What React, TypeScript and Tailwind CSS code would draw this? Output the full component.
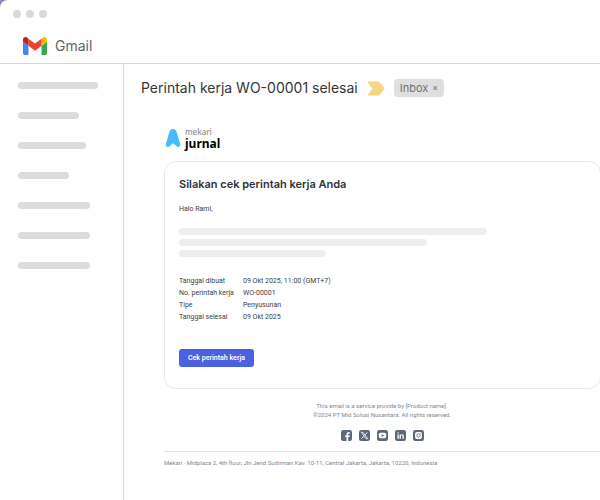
import { FC, ReactNode } from "react";

interface ISocial {
  name: string;
  icon: ReactNode;
}

const menuWidths = ["w-20", "w-[61px]", "w-[68px]", "w-[51px]", "w-18", "w-18", "w-18"];

const details = [
  { label: "Tanggal dibuat", value: "09 Okt 2025, 11:00 (GMT+7)" },
  { label: "No. perintah kerja", value: "WO-00001" },
  { label: "Tipe", value: "Penyusunan" },
  { label: "Tanggal selesai", value: "09 Okt 2025" },
];

const socials: ISocial[] = [
  {
    name: "Facebook",
    icon: (
      <path
        d="M12 24v-8.500H9V12h3V9.500C12 6.300 13.800 4.600 16.800 4.600l2.500.2v3.200h-1.600c-1.500 0-2 .9-2 1.900V12h3.600l-.6 3.500h-3V24z"
        fill="white"
      />
    ),
  },
  {
    name: "X",
    icon: (
      <g fill="none" stroke="white">
        <path d="M5 5h3.6L19 19h-3.6z" strokeWidth="1.8" />
        <path d="M18.2 5l-5.2 5.800M10.600 13.400L5.600 19" strokeWidth="2" />
      </g>
    ),
  },
  {
    name: "YouTube",
    icon: (
      <>
        <rect x="4" y="6" width="16" height="12" rx="3.5" fill="white" />
        <path d="M10 9l5.5 3-5.500 3z" fill="#5d6778" />
      </>
    ),
  },
  {
    name: "LinkedIn",
    icon: (
      <g fill="white">
        <circle cx="6.7" cy="6.6" r="1.7" />
        <path d="M5.3 9.6h2.8V19H5.3zM10 9.6h2.7v1.3c.5-.9 1.6-1.6 3-1.6 2.8 0 3.5 1.8 3.5 4.3V19h-2.8v-4.9c0-1.2-.2-2.4-1.7-2.4s-1.9 1.1-1.9 2.3v5H10z" />
      </g>
    ),
  },
  {
    name: "Instagram",
    icon: (
      <>
        <rect x="4.5" y="4.5" width="15" height="15" rx="4" fill="white" />
        <circle cx="12" cy="12" r="3.7" fill="white" stroke="#5d6778" strokeWidth="1.8" />
        <circle cx="16.6" cy="7.4" r="1" fill="#5d6778" />
      </>
    ),
  },
];

const GmailLogo: FC = () => (
  <svg className="w-6 h-[18px]" viewBox="0 0 88 66" aria-hidden="true">
    <path fill="#4285f4" d="M6 66h14V32L0 17v43c0 3.3 2.7 6 6 6" />
    <path fill="#34a853" d="M68 66h14c3.3 0 6-2.7 6-6V17L68 32" />
    <path fill="#fbbc04" d="M68 6v26l20-15V9c0-7.4-8.5-11.6-14.4-7.2" />
    <path fill="#ea4335" d="M20 32V6l24 18L68 6v26L44 50" />
    <path fill="#c5221f" d="M0 9v8l20 15V6l-5.600-4.200C8.500-2.600 0 1.600 0 9" />
  </svg>
);

const JurnalLogo: FC = () => (
  <div className="flex items-start gap-1 pl-px">
    <svg className="w-4 h-5" viewBox="0 0 16 20" aria-hidden="true">
      <path
        d="M8 1C5.700 1 4.800 2.500 4.200 4.400L.9 15.700C.2 18 2.200 20 4.100 18.600L8 15.200l3.900 3.400c1.900 1.400 3.900-.6 3.200-2.900L11.800 4.400C11.200 2.500 10.300 1 8 1z"
        fill="#45bdf8"
      />
    </svg>
    <div className="font-['Noto_Sans',sans-serif]">
      <p className="text-[8px] leading-[8px] font-medium text-[#8f8f8f]">mekari</p>
      <p className="text-[12px] leading-[15px] font-bold text-black">jurnal</p>
    </div>
  </div>
);

// top bar with the window dots and the app name
const Header: FC = () => (
  <header className="h-16 border-b border-[#d3dadb]">
    <div className="flex gap-[5px] px-[13px] pt-[10px]">
      <span className="size-2 rounded-full bg-[#d9d9d9]" />
      <span className="size-2 rounded-full bg-[#d9d9d9]" />
      <span className="size-2 rounded-full bg-[#d9d9d9]" />
    </div>
    <div className="flex items-center gap-2 px-[23px] pt-[18px]">
      <GmailLogo />
      <span className="text-[14px] leading-5 text-[#626466]">Gmail</span>
    </div>
  </header>
);

const Sidebar: FC = () => (
  <aside className="w-31 shrink-0 border-r border-[#d3dadb] pt-[18px] pl-[18px]">
    <ul className="space-y-[23px]">
      {menuWidths.map((width, index) => (
        <li key={index} className={`h-[7px] rounded-full bg-[#dcdcda] ${width}`} />
      ))}
    </ul>
  </aside>
);

const Subject: FC = () => (
  <div className="flex items-center gap-[9px] pl-[17px]">
    <h1 className="text-[14px] leading-5 text-[#333537]">
      Perintah kerja WO-00001 selesai
    </h1>
    <svg className="w-[18px] h-[15px]" viewBox="0 0 18 15" aria-hidden="true">
      <path
        d="M1 1H11.500Q12.300 1 12.800 1.700L17 7.500 12.800 13.300Q12.300 14 11.500 14H1L5.800 7.500z"
        fill="#f8d584"
        stroke="#f8d584"
        strokeLinejoin="round"
      />
    </svg>
    <button
      type="button"
      className="flex items-center gap-1 h-[18px] px-[6px] rounded-sm bg-[#dfdfdf] text-[11px] text-[#727272]"
    >
      Inbox <span className="text-[9px]">×</span>
    </button>
  </div>
);

const EmailCard: FC = () => (
  <section className="mt-[10px] -mr-px rounded-xl border border-[#e6e8e9] px-[14px] pt-[14px] pb-[21px] text-[7px] leading-3 text-[#3c3e42]">
    <h2 className="font-['Inter',sans-serif] text-[11px] leading-4 font-semibold text-[#2f3237]">
      Silakan cek perintah kerja Anda
    </h2>
    <p className="mt-[11px]">Halo Rami,</p>
    <div className="mt-[13px] space-y-1">
      <div className="h-[7px] w-[308px] rounded-full bg-[#eeeeed]" />
      <div className="h-[7px] w-[248px] rounded-full bg-[#eeeeed]" />
      <div className="h-[7px] w-[147px] rounded-full bg-[#eeeeed]" />
    </div>
    <table className="mt-[18px]">
      <tbody>
        {details.map(({ label, value }) => (
          <tr key={label}>
            <th scope="row" className="w-16 p-0 text-left font-normal">
              {label}
            </th>
            <td className="p-0">{value}</td>
          </tr>
        ))}
      </tbody>
    </table>
    <button
      type="button"
      className="mt-[26px] block h-[18px] px-[9px] rounded-[3px] bg-[#4b61dd] font-semibold text-white"
    >
      Cek perintah kerja
    </button>
  </section>
);

const Footer: FC = () => (
  <footer className="text-[6px] leading-[9px] text-[#85888c]">
    <div className="pt-3 text-center">
      <p>This email is a service provide by [Product name].</p>
      <p>©2024 PT Mid Solusi Nusantara. All rights reserved.</p>
      <div className="flex justify-center gap-[7px] pt-[11px]">
        {socials.map(({ name, icon }) => (
          <a key={name} href="#" aria-label={name}>
            <svg className="size-[11px]" viewBox="0 0 24 24">
              <rect width="24" height="24" rx="5" fill="#5d6778" />
              {icon}
            </svg>
          </a>
        ))}
      </div>
    </div>
    <p className="mt-[10px] border-t border-[#e3e5e6] pt-[6px]">
      Mekari · Midplaza 2, 4th floor, Jln Jend Sudirman Kav. 10-11, Central
      Jakarta, Jakarta, 10220, Indonesia
    </p>
  </footer>
);

const App: FC = () => {
  return (
    <div className="bg-[#8f8ab8]">
      <div className="min-h-screen flex flex-col overflow-hidden rounded-tl-lg bg-white font-['Inter',sans-serif]">
        <Header />
        <div className="flex flex-1">
          <Sidebar />
          <main className="flex-1 min-w-0 pt-[14px]">
            <Subject />
            <div className="pt-[30px] pl-10 font-['Roboto',sans-serif]">
              <JurnalLogo />
              <EmailCard />
              <Footer />
            </div>
          </main>
        </div>
      </div>
    </div>
  );
};

export default App;
